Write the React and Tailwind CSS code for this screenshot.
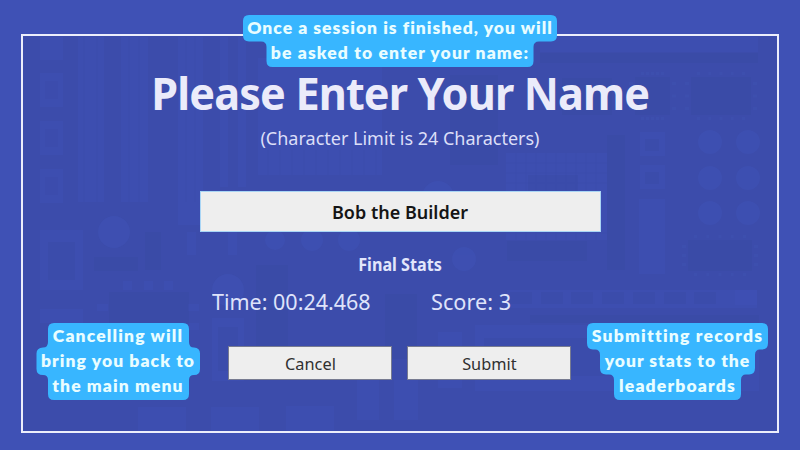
import React from "react";

const SEGOE = "font-['Noto_Sans','Open_Sans',sans-serif]";

// Faint circuit board artwork. Each list holds [x, y, width, height].
const LIGHT = [
  [78, 37, 26, 165], [121, 37, 27, 165], [178, 37, 25, 188], [220, 37, 8, 150], [238, 37, 8, 150],
  [258, 58, 124, 117], [540, 37, 218, 15], [506, 153, 101, 87], [640, 132, 25, 24], [640, 165, 25, 24],
  [639, 199, 26, 75], [507, 290, 250, 18], [735, 290, 22, 15], [40, 37, 23, 23], [40, 73, 23, 34],
  [40, 121, 23, 34], [40, 169, 23, 34], [40, 230, 43, 60], [40, 309, 43, 14], [212, 318, 32, 63],
  [123, 281, 9, 9], [144, 281, 9, 9], [164, 281, 9, 9], [97, 304, 11, 7], [188, 304, 11, 7],
  [188, 323, 11, 7], [187, 232, 9, 23], [228, 232, 9, 23], [357, 380, 22, 40], [394, 380, 24, 40],
  [286, 406, 48, 25], [138, 407, 48, 24], [211, 407, 48, 24], [438, 332, 24, 56], [475, 325, 284, 66],
];
const DARK = [
  [540, 53, 218, 10], [691, 77, 60, 38], [635, 77, 35, 38], [562, 78, 50, 37], [450, 75, 48, 90],
  [688, 240, 64, 31], [109, 292, 80, 50], [94, 257, 44, 14], [145, 232, 16, 38], [385, 294, 32, 65],
  [528, 175, 50, 40], [48, 242, 27, 38], [607, 135, 18, 135], [507, 241, 80, 20], [530, 315, 229, 8],
  [256, 265, 32, 95], [484, 338, 265, 38], [218, 327, 20, 44], [645, 139, 14, 12], [645, 172, 14, 12],
];
const FAINT = [[45, 81, 13, 18], [45, 129, 13, 18], [45, 177, 13, 18]];
const DOTS = [
  [710, 142, 12], [748, 142, 12], [710, 178, 12], [748, 178, 12], [710, 213, 12], [748, 213, 12],
  [114, 232, 16], [228, 290, 16], [275, 240, 10], [312, 240, 11], [349, 240, 11], [464, 259, 12],
  [438, 197, 16],
];

function chipPins(x, y, w, h) {
  const pins = [];
  for (let i = 0; i < 5; i++) {
    const px = x + 6 + (i * (w - 15)) / 4;
    pins.push([px, y - 5, 3, 3], [px, y + h + 2, 3, 3]);
  }
  for (let i = 0; i < 3; i++) {
    const py = y + 5 + (i * (h - 13)) / 2;
    pins.push([x - 6, py, 4, 3], [x + w + 2, py, 4, 3]);
  }
  return pins;
}

const PINS = [...chipPins(691, 77, 60, 38), ...chipPins(635, 77, 35, 38), ...chipPins(688, 240, 64, 31)];
const SLOTS = [510, 541, 571, 602, 633, 664, 694];

function Circuit() {
  const rect = (fill, opacity) => ([x, y, w, h], i) => (
    <rect key={i} x={x} y={y} width={w} height={h} fill={fill} opacity={opacity} />
  );
  return (
    <svg className="absolute inset-0 h-full w-full" viewBox="23 36 754 395" aria-hidden="true">
      <g>{LIGHT.map(rect("#4054b9", 0.36))}</g>
      <g>{DARK.map(rect("#39489f", 0.3))}</g>
      <g>{FAINT.map(rect("#3c4cab", 0.4))}</g>
      <g>{PINS.map(rect("#4355b5", 0.3))}</g>
      <g fill="#4054b9" opacity="0.45">
        {DOTS.map(([x, y, r], i) => <circle key={i} cx={x} cy={y} r={r} />)}
      </g>
      <g fill="#3a49a3" opacity="0.35">
        {SLOTS.map((x) => <rect key={x} x={x} y="292" width="22" height="12" />)}
      </g>
      <g stroke="#3b4ba9" strokeWidth="1" opacity="0.35">
        {[516, 526, 536, 546, 556, 566, 576, 586, 596].map((x) => <path key={x} d={`M${x} 153V240`} />)}
        {[163, 173, 183, 233].map((y) => <path key={y} d={`M506 ${y}H607`} />)}
        {[268, 280, 292, 304, 316, 328, 340, 352, 364, 376].map((x) => <path key={x} d={`M${x} 150V175`} />)}
        {[84, 97, 129, 139, 186, 195].map((x) => <path key={x} d={`M${x} 37V202`} />)}
      </g>
    </svg>
  );
}

function Callout({ place, shape, lines }) {
  return (
    <div className={`absolute ${place}`}>
      <svg className="absolute inset-0 h-full w-full overflow-visible" aria-hidden="true">
        <path d={shape} fill="#38b6ff" />
      </svg>
      <div className="relative flex flex-col items-center font-[Lato,sans-serif] text-[17.5px] leading-[25px] font-extrabold whitespace-nowrap text-[#e9fdff]">
        {lines.map(([text, spacing]) => <span key={text} className={spacing}>{text}</span>)}
      </div>
    </div>
  );
}

export default function App() {
  return (
    <div className={`relative h-[450px] w-[800px] overflow-hidden bg-[#3f51b5] px-[21px] pt-[34px] ${SEGOE}`}>
      <main className="relative h-[399px] w-[758px] border-2 border-[#eceefb] bg-[#3c4cab]">
        <Circuit />
        <div className="relative flex flex-col items-center whitespace-nowrap text-[#ebebfa]">
          <h1 className="mt-[27px] h-[60px] scale-x-[0.96] text-[45px] leading-[60px] font-bold tracking-[-0.9px]">Please Enter Your Name</h1>
          <p className="mt-[3px] h-[24px] text-[18px] leading-[24px] text-[#dcdff8]">(Character Limit is 24 Characters)</p>
          <div className="mt-[41px] flex h-[41px] w-[401px] items-center justify-center border border-[#a9d5f5] bg-[#eeeeee] pt-[2px] text-[18px] font-semibold text-[#151515]">
            <span>Bob the Builder</span>
          </div>
          <h2 className="mt-[21px] h-[24px] scale-x-[0.95] text-[17px] leading-[24px] font-bold text-[#e2e6fb]">Final Stats</h2>
          <div className="mt-[10px] flex h-[30px] w-full pl-[189px] text-[22.5px] leading-[30px] text-[#dfe3fa]">
            <span className="w-[219px] origin-left scale-x-[0.955]">Time: 00:24.468</span>
            <span className="origin-left scale-x-[0.965]">Score: 3</span>
          </div>
          <div className="mt-[29px] mr-px flex gap-[15px] text-[17px] text-[#303030]">
            <button className="h-[34px] w-[164px] border border-[#777b91] bg-[#eeeeee] pt-[2px]"><span className="inline-block scale-x-[0.96]">Cancel</span></button>
            <button className="h-[34px] w-[164px] border border-[#777b91] bg-[#eeeeee] pt-[2px]"><span className="inline-block scale-x-[0.96]">Submit</span></button>
          </div>
        </div>
      </main>
      <Callout
        place="left-[243px] top-[15px] h-[52px] w-[314px]"
        shape="M6 0H308Q314 0 314 6V20Q314 26.5 308 26.5H296Q290.5 26.5 290.5 32V46Q290.5 52 284.5 52H29.5Q23.5 52 23.5 46V32Q23.5 26.5 18 26.5H6Q0 26.5 0 20V6Q0 0 6 0Z"
        lines={[["Once a session is finished, you will", "tracking-[1.02px]"], ["be asked to enter your name:", "tracking-[1.12px]"]]}
      />
      <Callout
        place="left-[36px] top-[323px] h-[77px] w-[164px]"
        shape="M18 0H147Q153 0 153 6V19Q153 24.5 158 24.5Q164 25 164 30.5V46Q164 52 158 52Q153 52 153 57V71Q153 77 147 77H18Q12 77 12 71V57Q12 52 7 52Q.5 52 .5 46V30.5Q.5 25 7 24.5Q12 24.5 12 19V6Q12 0 18 0Z"
        lines={[["Cancelling will", "tracking-[1.15px]"], ["bring you back to", "tracking-[1.08px]"], ["the main menu", "tracking-[1.1px]"]]}
      />
      <Callout
        place="left-[587px] top-[323px] h-[77px] w-[181px]"
        shape="M6 0H175Q181 0 181 6V20Q181 26.5 175 26.5H173Q168 26.5 168 32V45Q168 51.5 162 51.5H159Q154 51.5 154 57V71Q154 77 148 77H33Q27 77 27 71V57Q27 51.5 22 51.5H19Q13 51.5 13 45V32Q13 26.5 8 26.5H6Q0 26.5 0 20V6Q0 0 6 0Z"
        lines={[["Submitting records", "tracking-[1.22px]"], ["your stats to the", "tracking-[1px]"], ["leaderboards", "tracking-[1.16px]"]]}
      />
    </div>
  );
}
